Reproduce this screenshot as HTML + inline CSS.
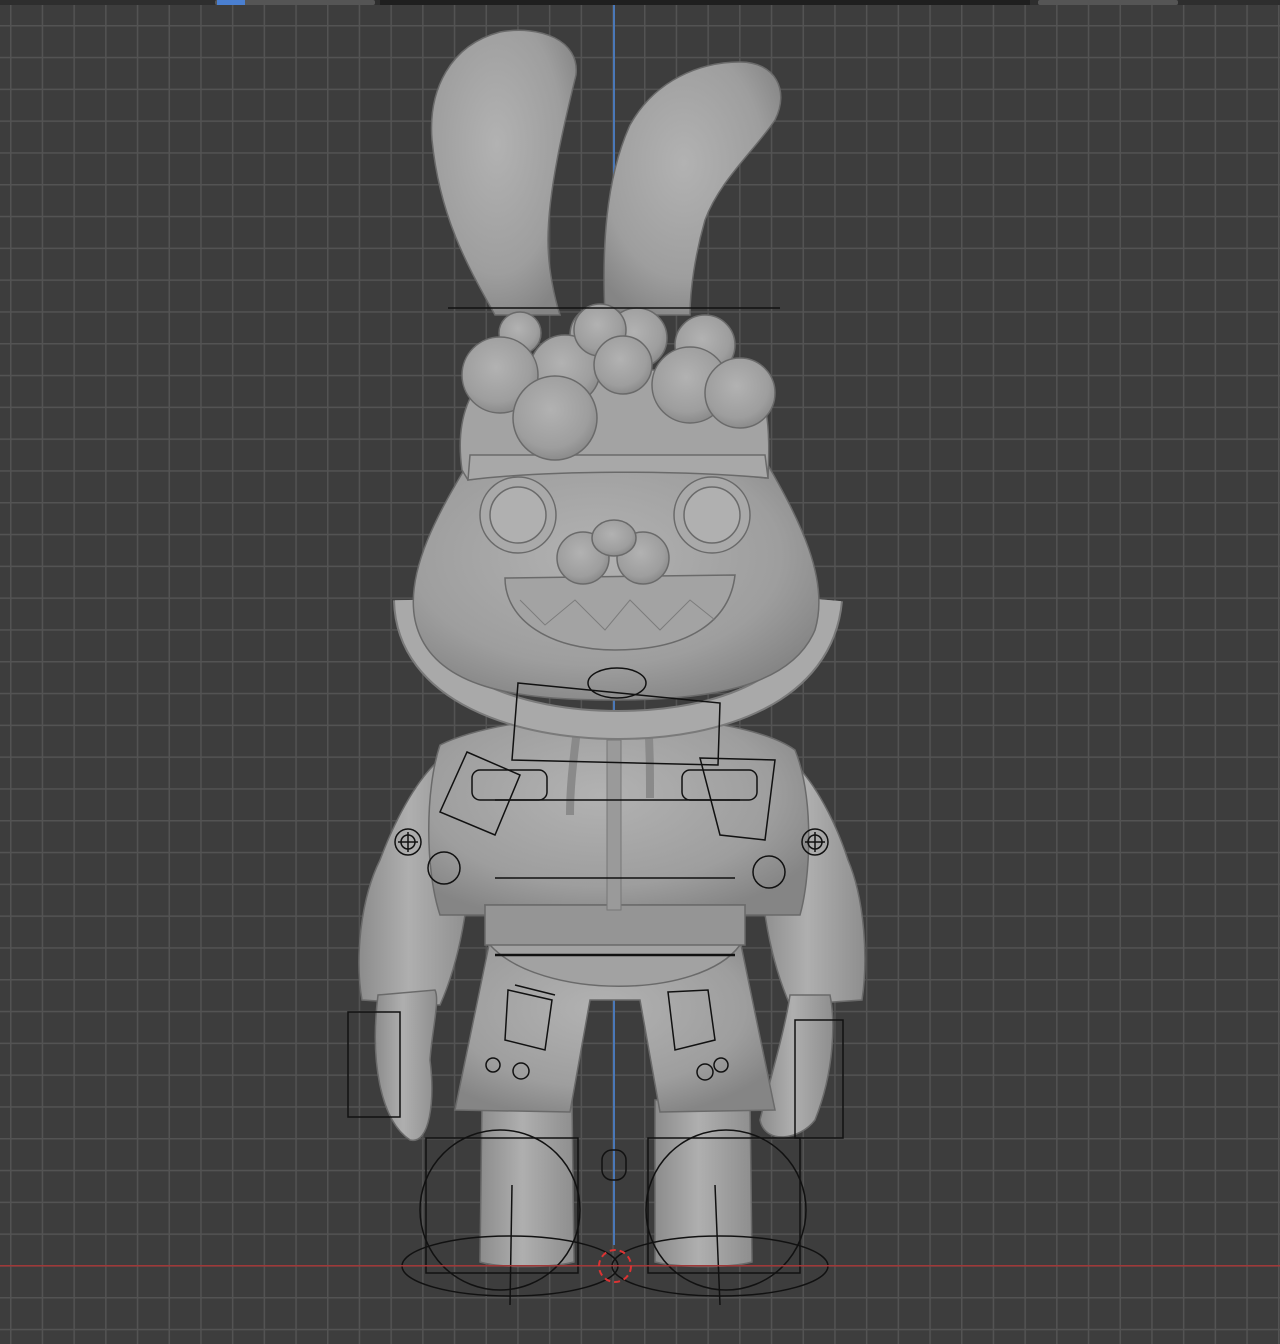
<!DOCTYPE html>
<html><head><meta charset="utf-8"><style>
html,body{margin:0;padding:0;width:1280px;height:1344px;overflow:hidden;background:#3d3d3d}
svg{display:block}
</style></head><body>
<svg width="1280" height="1344" viewBox="0 0 1280 1344" xmlns="http://www.w3.org/2000/svg">
<defs>
<pattern id="g" x="10" y="25" width="31.7" height="31.8" patternUnits="userSpaceOnUse">
<rect width="31.7" height="31.8" fill="#3d3d3d"/>
<rect width="1.5" height="31.8" fill="#535353"/>
<rect width="31.7" height="1.5" fill="#535353"/>
</pattern>
<radialGradient id="s" cx="45%" cy="40%" r="65%">
<stop offset="0" stop-color="#b2b2b2"/><stop offset="0.7" stop-color="#9e9e9e"/><stop offset="1" stop-color="#858585"/>
</radialGradient>
<linearGradient id="lg" x1="0" x2="1"><stop offset="0" stop-color="#8c8c8c"/><stop offset="0.45" stop-color="#afafaf"/><stop offset="1" stop-color="#8e8e8e"/></linearGradient>
</defs>
<rect width="1280" height="1344" fill="url(#g)"/>
<rect x="0" y="0" width="1280" height="5" fill="#2e2e2e"/>
<rect x="215" y="0" width="160" height="5" rx="2" fill="#555"/>
<rect x="217" y="0" width="28" height="5" fill="#4a7fd0"/>
<rect x="380" y="0" width="650" height="5" fill="#1f1f1f"/>
<rect x="1038" y="0" width="140" height="5" rx="2" fill="#555"/>
<rect x="613" y="5" width="2" height="1240" fill="#4a78b8"/>
<g stroke="#6a6a6a" stroke-width="1.5">
<!-- ears -->
<path d="M432 140 C428 90 450 45 500 32 C540 25 580 40 576 75 C565 120 548 190 548 240 C548 270 555 300 560 315 L495 315 C470 270 440 220 432 140Z" fill="url(#s)"/>
<path d="M605 315 C602 250 605 180 630 125 C655 80 700 62 740 62 C775 62 790 90 775 120 C755 150 720 180 705 220 C695 255 690 290 690 315Z" fill="url(#s)"/>
<!-- arms -->
<path d="M450 752 C420 770 395 820 380 860 C360 900 355 960 362 1000 L440 1005 C460 960 470 900 470 850Z" fill="url(#lg)"/>
<path d="M780 752 C810 770 835 820 848 860 C865 900 868 960 862 1000 L790 1005 C770 960 760 900 760 850Z" fill="url(#lg)"/>
<!-- hands -->
<path d="M378 995 C370 1060 380 1120 410 1140 C430 1145 435 1100 430 1060 C432 1030 440 1000 435 990Z" fill="url(#lg)"/>
<path d="M790 995 C785 1030 770 1080 760 1120 C765 1145 800 1140 815 1120 C835 1070 835 1020 830 995Z" fill="url(#lg)"/>
<!-- legs -->
<path d="M482 1100 L572 1100 L574 1262 C550 1268 500 1268 480 1262Z" fill="url(#lg)"/>
<path d="M655 1100 L750 1100 L752 1262 C730 1268 680 1268 655 1262Z" fill="url(#lg)"/>
<!-- shorts -->
<path d="M490 940 L740 940 L775 1110 L660 1112 L640 1000 L590 1000 L570 1112 L455 1110Z" fill="url(#s)"/>
<!-- torso -->
<path d="M440 745 C480 725 560 715 615 715 C670 715 760 725 795 750 C815 800 810 880 800 915 L440 915 C425 870 425 790 440 745Z" fill="url(#s)"/>
<path d="M485 905 L745 905 L740 945 C700 1000 540 1000 490 945Z" fill="#a2a2a2"/>
<path d="M485 905 L745 905 L745 945 L485 945Z" fill="#959595"/>
<rect x="607" y="740" width="14" height="170" fill="#9a9a9a" stroke="#777" stroke-width="1"/>
<path d="M578 720 C575 750 570 780 570 815" fill="none" stroke="#8a8a8a" stroke-width="8"/>
<path d="M648 720 C650 750 650 770 650 798" fill="none" stroke="#8a8a8a" stroke-width="8"/>
<!-- collar ring -->
<path d="M408 600 C410 690 520 725 618 725 C720 725 820 690 828 600" fill="none" stroke="#7a7a7a" stroke-width="30"/>
<path d="M408 600 C410 690 520 725 618 725 C720 725 820 690 828 600" fill="none" stroke="#a9a9a9" stroke-width="26"/>
<!-- head -->
<path d="M470 460 L765 460 C800 520 830 580 815 630 C790 690 700 700 615 700 C520 700 430 690 415 620 C405 570 440 510 470 460Z" fill="url(#s)"/>
<!-- hat -->
<path d="M462 470 C455 420 470 380 500 370 L740 370 C770 385 770 430 768 478 L765 478 C680 468 550 468 468 480Z" fill="#a3a3a3"/>
<path d="M470 455 L765 455 L768 478 C680 470 550 470 468 480Z" fill="#a8a8a8"/>
<!-- bubbles -->
<circle cx="600" cy="335" r="30" fill="url(#s)"/>
<circle cx="637" cy="338" r="30" fill="url(#s)"/>
<circle cx="705" cy="345" r="30" fill="url(#s)"/>
<circle cx="520" cy="333" r="21" fill="url(#s)"/>
<circle cx="565" cy="370" r="35" fill="url(#s)"/>
<circle cx="690" cy="385" r="38" fill="url(#s)"/>
<circle cx="740" cy="393" r="35" fill="url(#s)"/>
<circle cx="500" cy="375" r="38" fill="url(#s)"/>
<circle cx="600" cy="330" r="26" fill="url(#s)"/>
<circle cx="623" cy="365" r="29" fill="url(#s)"/>
<circle cx="555" cy="418" r="42" fill="url(#s)"/>
<!-- eyes -->
<circle cx="518" cy="515" r="38" fill="#a9a9a9"/><circle cx="518" cy="515" r="28" fill="#b0b0b0"/>
<circle cx="712" cy="515" r="38" fill="#a9a9a9"/><circle cx="712" cy="515" r="28" fill="#b0b0b0"/>
<!-- mouth -->
<path d="M505 578 L735 575 C730 620 690 650 615 650 C550 650 505 620 505 578Z" fill="#a3a3a3"/>
<path d="M520 600 L545 625 L575 600 L605 630 L630 600 L660 630 L690 600 L715 620" fill="none" stroke="#7c7c7c" stroke-width="1"/>
<!-- nose -->
<circle cx="583" cy="558" r="26" fill="url(#s)"/><circle cx="643" cy="558" r="26" fill="url(#s)"/>
<ellipse cx="614" cy="538" rx="22" ry="18" fill="url(#s)"/>
</g>
<g stroke="#111" stroke-width="1.5" fill="none">
<line x1="448" y1="308" x2="780" y2="308"/>
<ellipse cx="617" cy="683" rx="29" ry="15"/>
<path d="M518 683 L720 703 L718 765 L512 760Z"/>
<path d="M467 752 L520 775 L495 835 L440 812Z"/>
<rect x="472" y="770" width="75" height="30" rx="8"/>
<path d="M700 758 L775 760 L765 840 L720 835Z"/>
<rect x="682" y="770" width="75" height="30" rx="8"/>
<line x1="495" y1="800" x2="740" y2="800"/>
<line x1="495" y1="878" x2="735" y2="878"/>
<line x1="495" y1="955" x2="735" y2="955" stroke-width="2.5"/>
<circle cx="408" cy="842" r="13"/><circle cx="408" cy="842" r="7"/><path d="M398 842H418M408 832V852"/>
<circle cx="815" cy="842" r="13"/><circle cx="815" cy="842" r="7"/><path d="M805 842H825M815 832V852"/>
<circle cx="444" cy="868" r="16"/><circle cx="769" cy="872" r="16"/>
<path d="M508 990 L552 1000 L545 1050 L505 1040Z M515 985 L555 995"/>
<path d="M668 992 L708 990 L715 1040 L675 1050Z"/>
<rect x="348" y="1012" width="52" height="105"/>
<rect x="795" y="1020" width="48" height="118"/>
<circle cx="521" cy="1071" r="8"/><circle cx="705" cy="1072" r="8"/>
<circle cx="493" cy="1065" r="7"/><circle cx="721" cy="1065" r="7"/>
<circle cx="500" cy="1210" r="80"/><circle cx="726" cy="1210" r="80"/>
<rect x="426" y="1138" width="152" height="135"/>
<rect x="648" y="1138" width="152" height="135"/>
<ellipse cx="510" cy="1266" rx="108" ry="30"/>
<ellipse cx="720" cy="1266" rx="108" ry="30"/>
<rect x="602" y="1150" width="24" height="30" rx="10"/>
<line x1="512" y1="1185" x2="510" y2="1305"/>
<line x1="715" y1="1185" x2="720" y2="1305"/>
</g>
<rect x="0" y="1265" width="1280" height="1.5" fill="#a03838"/>
<circle cx="615" cy="1266" r="16" fill="none" stroke="#d33" stroke-width="2" stroke-dasharray="6 4"/>
</svg>
</body></html>
